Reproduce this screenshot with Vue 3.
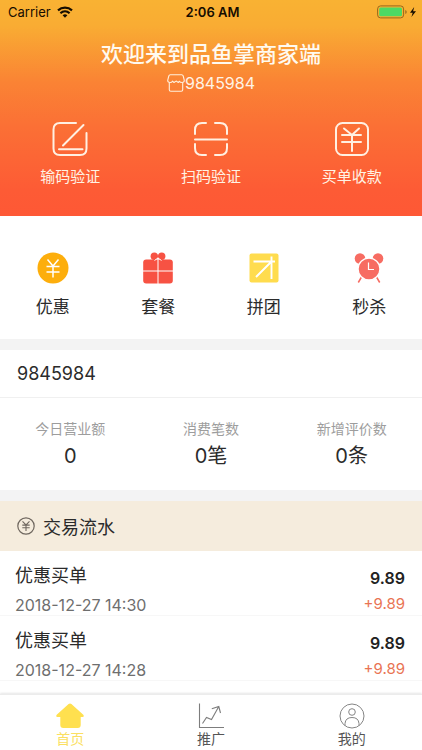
<script setup>
const stats = [
  { label: '今日营业额', value: '0' },
  { label: '消费笔数', value: '0笔' },
  { label: '新增评价数', value: '0条' },
]
const records = [
  { id: 1, title: '优惠买单', time: '2018-12-27 14:30', total: '9.89', change: '+9.89' },
  { id: 2, title: '优惠买单', time: '2018-12-27 14:28', total: '9.89', change: '+9.89' },
]
</script>

<template>
  <div class="page">
    <div class="scroll">
      <header class="hero">
        <div class="status">
          <div class="carrier">
            <span>Carrier</span>
            <svg width="16" height="12" viewBox="0 0 16 12" aria-hidden="true">
              <path d="M1 4.400C5 .7 11 .7 15 4.400M3.400 7.200C6.100 4.800 9.900 4.800 12.600 7.200" fill="none" stroke="#160d00" stroke-width="2.200" />
              <path d="M8 11.700 5.600 9.300Q8 7.400 10.400 9.300Z" fill="#160d00" />
            </svg>
          </div>
          <span class="clock">2:06 AM</span>
          <div class="battery">
            <svg width="40" height="14" viewBox="0 0 40 14" aria-hidden="true">
              <rect x=".6" y=".9" width="26" height="12" rx="3" fill="none" stroke="#96691d" stroke-width="1" />
              <rect x="2.200" y="2.500" width="22.800" height="8.800" rx="1.500" fill="#4cd964" />
              <path d="M28.300 5v4q1.400-.6 1.400-2t-1.400-2z" fill="#96691d" />
              <path d="M37.200 2 33 7.700h2.700L34.400 12 39 6.200h-2.900z" fill="#160d00" />
            </svg>
          </div>
        </div>
        <h1>欢迎来到品鱼掌商家端</h1>
        <div class="shop">
          <svg width="18" height="18" viewBox="0 0 18 18" fill="none" stroke="#fff0dc" stroke-width="1.100" stroke-linejoin="round" aria-hidden="true">
            <path d="M3.300.8h11.400Q15.800.8 16.200 2L17.300 6.300Q17.300 8.500 15.200 8.500 13 8.500 12.400 7.200L11.400 8.400 9.100 7.100 7 8.500 5.500 7.200Q4.800 8.600 2.800 8.500 .7 8.500.7 6.300L1.800 2Q2.200.8 3.300.8ZM2.300 8.500v7.200Q2.300 17.200 3.800 17.200h10.400q1.500 0 1.500-1.500V8.500" />
          </svg>
          <span>9845984</span>
        </div>
        <div class="actions">
          <button type="button">
            <svg width="36" height="36" viewBox="0 0 36 36" aria-hidden="true">
              <path d="M24 2H8Q1.500 2 1.500 8.500v19Q1.500 34 8 34h20q6.500 0 6.500-6.500V12M31.500 4 11 24.500M7 28.300h23.500" />
            </svg>
            <span>输码验证</span>
          </button>
          <button type="button">
            <svg width="36" height="36" viewBox="0 0 36 36" aria-hidden="true">
              <path d="M13 2H9Q2 2 2 9v4M22 2h5q7 0 7 7v4M2 23v4q0 7 7 7h4M22 34h5q7 0 7-7v-4M2 18.500h32" />
            </svg>
            <span>扫码验证</span>
          </button>
          <button type="button">
            <svg width="36" height="36" viewBox="0 0 36 36" aria-hidden="true">
              <rect x="2" y="2" width="32" height="32" rx="6.500" />
              <path d="M10 7.500 18 14l7-6.500M8 14h19M8 21h19M18 14v16" />
            </svg>
            <span>买单收款</span>
          </button>
        </div>
      </header>

      <nav class="services" aria-label="服务">
        <button type="button">
          <svg width="34" height="34" viewBox="0 0 34 34" aria-hidden="true">
            <circle cx="17" cy="17" r="15.500" fill="#fdae0c" />
            <path d="M11.500 8.500 17 15l5.500-6.500M10.500 15.500h13M10.500 21h13M17 15v11.500" fill="none" stroke="#fff" stroke-width="1.500" />
          </svg>
          <span>优惠</span>
        </button>
        <button type="button">
          <svg width="34" height="34" viewBox="0 0 34 34" aria-hidden="true">
            <circle cx="13.300" cy="5.200" r="3.700" fill="#f75243" />
            <circle cx="20.700" cy="5.200" r="3.700" fill="#f75243" />
            <rect x="2.200" y="8.500" width="29.600" height="24" rx="3" fill="#f75243" />
            <path d="M2 20h30M17 8v25M13.500 9.500 17 7 20.500 9.500" fill="none" stroke="#fff" stroke-width="1" />
          </svg>
          <span>套餐</span>
        </button>
        <button type="button">
          <svg width="34" height="34" viewBox="0 0 34 34" aria-hidden="true">
            <rect x="2.500" y="2.500" width="29" height="29" rx="2" fill="#ffdc4e" />
            <path d="M6.500 10.500H28M24.500 5.500V28M24.500 10.500 9 26" fill="none" stroke="#fff" stroke-width="1.900" />
          </svg>
          <span>拼团</span>
        </button>
        <button type="button">
          <svg width="34" height="34" viewBox="0 0 34 34" aria-hidden="true">
            <g fill="#f76c62">
              <circle cx="8" cy="7.500" r="5.300" />
              <circle cx="26" cy="7.500" r="5.300" />
            </g>
            <path d="M9.500 26 6.300 31.500M24.500 26l3.200 5.500" stroke="#f76c62" stroke-width="1.500" />
            <circle cx="17" cy="18" r="10.900" fill="#f76c62" stroke="#fff" stroke-width="1.200" />
            <path d="M16.500 11.500v7H22" fill="none" stroke="#fff" stroke-width="1.200" />
          </svg>
          <span>秒杀</span>
        </button>
      </nav>

      <section class="summary">
        <h2>9845984</h2>
        <dl>
          <div v-for="s in stats" :key="s.label">
            <dt>{{ s.label }}</dt>
            <dd>{{ s.value }}</dd>
          </div>
        </dl>
      </section>

      <section class="flow">
        <h2>
          <svg width="18" height="18" viewBox="0 0 18 18" fill="none" stroke="#6f675f" stroke-width="1.100" aria-hidden="true">
            <circle cx="9" cy="9" r="8.200" stroke-width="1.200" />
            <path d="M5.500 4.300 9 8l3.500-3.700M5.300 8.100h7.400M5.300 10.800h7.400M9 8v6" />
          </svg>
          <span>交易流水</span>
        </h2>
        <ul>
          <li v-for="r in records" :key="r.id">
            <div class="what">
              <span class="title">{{ r.title }}</span>
              <time>{{ r.time }}</time>
            </div>
            <div class="amount">
              <strong>{{ r.total }}</strong>
              <span>{{ r.change }}</span>
            </div>
          </li>
        </ul>
      </section>
    </div>

    <nav class="tabs" aria-label="主导航">
      <a href="#home" class="active" aria-current="page">
        <svg width="28" height="26" viewBox="0 0 28 26" aria-hidden="true">
          <path d="M12.600.9Q14 0 15.400.9L27.300 11.700Q28.600 13.600 26.500 14H24.700v8q0 3-3 3H7.300q-3 0-3-3V14H1.500Q-.6 13.600.7 11.700Z" fill="#ffe04f" />
        </svg>
        <span>首页</span>
      </a>
      <a href="#promotion">
        <svg width="28" height="26" viewBox="0 0 28 26" fill="none" stroke="#7d7d7d" stroke-width="1.100" aria-hidden="true">
          <path d="M2.500.5v24H27M5.500 20.500 9.500 14.500 14.500 16.500 21.500 4M14.800 5.700 21.800 3.500 23.500 10" />
        </svg>
        <span>推广</span>
      </a>
      <a href="#mine">
        <svg width="28" height="26" viewBox="0 0 28 26" fill="none" stroke="#858585" stroke-width="1" aria-hidden="true">
          <circle cx="14" cy="13" r="12" />
          <circle cx="14" cy="9" r="3.300" />
          <path d="M7 22.500V20.500Q7.500 14.500 14 14.500T21 20.500V22.500" />
        </svg>
        <span>我的</span>
      </a>
    </nav>
  </div>
</template>

<style>
body {
  margin: 0;
}
</style>

<style scoped>
.page {
  display: flex;
  flex-direction: column;
  height: 100vh;
  background: #fff;
  color: #2b2b2b;
  font-family: Inter, "Noto Sans CJK SC", sans-serif;
}
.scroll {
  flex: 1;
  min-height: 0;
  overflow: hidden auto;
}
h1,
h2,
dl,
dd,
ul {
  margin: 0;
  padding: 0;
  font-weight: 400;
}
svg {
  display: block;
  flex: none;
}
button {
  border: 0;
  padding: 0;
  background: none;
  color: inherit;
  font: inherit;
  cursor: pointer;
}
.hero {
  height: 216px;
  background: linear-gradient(#f9b233, #f9ac33 12%, #fa8334 38%, #fb7035 58%, #fd5b35 88%, #fe5835);
  color: #fff3e4;
}
.status {
  display: grid;
  grid-template-columns: 1fr auto 1fr;
  align-items: center;
  height: 24px;
  padding: 0 5px 0 8px;
  color: #160d00;
  font-size: 13px;
}
.carrier {
  display: flex;
  align-items: center;
  gap: 6px;
}
.clock {
  font-weight: 600;
}
.battery {
  justify-self: end;
}
h1 {
  padding-top: 14px;
  font-size: 22px;
  font-weight: 500;
  line-height: 32px;
  text-align: center;
  color: #fffaf0;
}
.shop {
  display: flex;
  justify-content: center;
  align-items: center;
  height: 26px;
  font-size: 16px;
}
.actions {
  display: grid;
  grid-template-columns: repeat(3, 1fr);
  padding-top: 25px;
}
.actions button {
  display: flex;
  flex-direction: column;
  align-items: center;
  gap: 8px;
  font-size: 15px;
  line-height: 24px;
}
.actions svg {
  fill: none;
  stroke: #fff0e2;
  stroke-width: 2;
  stroke-linecap: round;
}
.services {
  display: grid;
  grid-template-columns: repeat(4, 1fr);
  padding: 35px 0 18px;
  border-bottom: 11px solid #f3f3f3;
}
.services button {
  display: flex;
  flex-direction: column;
  align-items: center;
  gap: 8px;
  font-size: 17px;
  line-height: 28px;
}
.summary {
  border-bottom: 11px solid #f3f3f4;
}
.summary h2 {
  padding: 0 17px;
  border-bottom: 1px solid #f0f0f0;
  font-size: 18px;
  line-height: 47px;
}
dl {
  display: grid;
  grid-template-columns: repeat(3, 1fr);
  padding: 20px 0 17px;
  text-align: center;
}
dt {
  color: #9d9d9d;
  font-size: 14px;
  line-height: 22px;
}
dd {
  font-size: 20px;
  line-height: 33px;
}
.flow h2 {
  display: flex;
  align-items: center;
  gap: 8px;
  height: 50px;
  padding: 0 17px;
  background: #f5ecdd;
  font-size: 18px;
}
ul {
  list-style: none;
}
li {
  display: flex;
  justify-content: space-between;
  padding: 10px 17px 0 15px;
  height: 54px;
  border-bottom: 1px solid #f7f7f7;
}
.what,
.amount {
  display: flex;
  flex-direction: column;
}
.amount {
  align-items: flex-end;
  color: #e97453;
  font-size: 15px;
  line-height: 26px;
}
.title {
  font-size: 18px;
  line-height: 30px;
}
time {
  color: #6e6e6e;
  font-size: 16px;
  line-height: 28px;
}
strong {
  padding-top: 4px;
  color: #222;
  font-size: 16px;
  font-weight: 600;
  line-height: 26px;
}
.tabs {
  display: grid;
  grid-template-columns: repeat(3, 1fr);
  padding: 8px 0 1px;
  border-top: 1px solid #ececec;
  box-shadow: 0 -1px 2px #e6e6e6;
}
.tabs a {
  display: flex;
  flex-direction: column;
  align-items: center;
  color: #555;
  font-size: 14px;
  line-height: 20px;
  text-decoration: none;
}
.tabs .active {
  color: #fbdf62;
}
</style>
